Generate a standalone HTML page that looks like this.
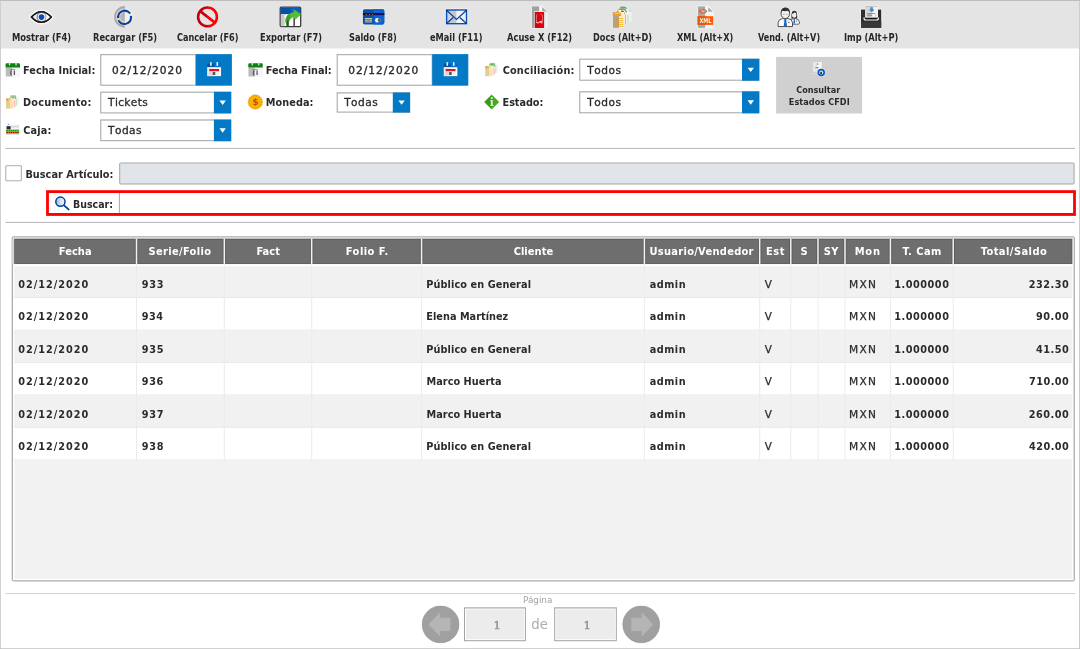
<!DOCTYPE html>
<html lang="es">
<head>
<meta charset="utf-8">
<title>Consulta de Documentos</title>
<style>
html,body{margin:0;padding:0;}
body{width:1080px;height:649px;overflow:hidden;background:#fff;position:relative;font-family:"DejaVu Sans","Liberation Sans",sans-serif;}
#app{position:absolute;left:0;top:0;width:1080px;height:649px;overflow:hidden;background:#fff;will-change:transform;}
#bg{position:absolute;left:0;top:0;display:block;}
.t{position:absolute;white-space:pre;display:block;}
</style>
</head>
<body>
<div id="app">
<svg id="bg" width="1080" height="649" viewBox="0 0 1080 649">
<rect x="0.00" y="0.00" width="1080.00" height="649.00" fill="#ffffff"/>
<rect x="0.00" y="0.00" width="1080.00" height="48.50" fill="#e4e4e4"/>
<svg x="20" y="0" width="50" height="30" viewBox="0 0 50 30">
<path d="M10.6 17 Q21.3 5.2 32 17 Q21.3 28.6 10.6 17Z" fill="#f4f4f4" stroke="#f6f6f6" stroke-width="3.4" stroke-linejoin="round"/>
<path d="M11.4 17 Q21.3 6.3 31.3 17 Q21.3 27.6 11.4 17Z" fill="#ebebeb" stroke="#1c1c1c" stroke-width="1.5" stroke-linejoin="round"/>
<path d="M25.5 12.6 L30.6 17 L25.5 21.4 Z" fill="#ffffff"/>
<circle cx="21.5" cy="17" r="4.9" fill="#8a8a8a"/>
<circle cx="21.7" cy="17" r="3.9" fill="#f2f2f2"/>
<circle cx="21.5" cy="17.1" r="2.8" fill="#0a49bb"/>
<path d="M11.4 17 Q21.3 6.3 31.3 17 Q21.3 27.6 11.4 17Z" fill="none" stroke="#1c1c1c" stroke-width="1.5" stroke-linejoin="round"/>
</svg>
<svg x="100" y="0" width="50" height="30" viewBox="0 0 50 30">
<circle cx="24.6" cy="16.9" r="10.2" fill="#e9e7e4"/>
<path d="M24.9 6.1 A10.8 10.8 0 0 0 24.9 27.7 Z" fill="#a9a9a9"/>
<circle cx="24.6" cy="16.9" r="8.5" fill="#f3ece3"/>
<path d="M24.9 8.6 A8.3 8.3 0 0 0 24.9 25.2 Z" fill="#d9cfc4"/>
<circle cx="24.6" cy="16.9" r="4.9" fill="#f1f1f1"/>
<path d="M24.9 12 A4.9 4.9 0 0 0 24.9 21.8 Z" fill="#b4b4b4"/>
<path d="M18.1 16.9 A6.6 6.6 0 0 1 29.6 12.9" fill="none" stroke="#0541a9" stroke-width="2" stroke-linecap="round"/>
<path d="M31 17 A6.6 6.6 0 0 1 18.9 21" fill="none" stroke="#0541a9" stroke-width="2" stroke-linecap="round"/>
<circle cx="18.1" cy="16.9" r="1.2" fill="#0541a9"/>
<circle cx="31" cy="17" r="1.2" fill="#0541a9"/>
</svg>
<svg x="183" y="0" width="50" height="30" viewBox="0 0 50 30">
<defs><linearGradient id="gcan" x1="0" x2="1" y1="0" y2="0"><stop offset="0.5" stop-color="#c4000c"/><stop offset="0.5" stop-color="#ff0000"/></linearGradient></defs>
<circle cx="24.5" cy="16.9" r="10.9" fill="#e9f1f1"/>
<circle cx="24.5" cy="16.9" r="8.2" fill="#e4e4e4"/>
<g stroke="url(#gcan)" fill="none" stroke-width="2.6">
<circle cx="24.5" cy="16.9" r="9.4"/>
<path d="M17.4 11.4 L31.6 22.4"/>
</g>
<rect x="14" y="6" width="10.5" height="22" fill="none"/>
</svg>
<svg x="266" y="0" width="50" height="30" viewBox="0 0 50 30">
<rect x="13.3" y="6.3" width="22.3" height="21.2" rx="1.5" fill="#f3f3f3"/>
<rect x="14.2" y="7.2" width="20.5" height="19.4" rx="1" fill="#ffffff" stroke="#383838" stroke-width="1.3"/>
<rect x="14.6" y="7.6" width="19.7" height="6.6" fill="#0451a8"/>
<rect x="24.5" y="7.6" width="9.8" height="6.6" fill="#0660c4"/>
<rect x="14.8" y="14.6" width="3.8" height="11.6" fill="#c9c9c9"/>
<path d="M20.6 26 Q16.6 14.6 27.6 12.2 L27.6 9.2 L35.3 14.2 L29.3 19.6 L29 17.3 Q22.4 17.4 22.6 26 Z" fill="#56bd32"/>
<path d="M20.6 26 Q17.2 17.4 24 13.4 L24 18.6 Q22.3 21 22.6 26 Z" fill="#3f9d2a"/>
<rect x="21" y="20.5" width="1.5" height="5.6" fill="#444444"/>
<rect x="27.4" y="17.6" width="1.5" height="8.6" fill="#444444"/>
</svg>
<svg x="349" y="0" width="50" height="30" viewBox="0 0 50 30">
<rect x="13.2" y="8.6" width="22.8" height="16.5" rx="2.2" fill="#f6efe6"/>
<rect x="13.9" y="9.2" width="21.4" height="15.2" rx="1.6" fill="#0552a4"/>
<path d="M24.6 9.2 H33.7 A1.6 1.6 0 0 1 35.3 10.8 V22.8 A1.6 1.6 0 0 1 33.7 24.4 H24.6 Z" fill="#0a63d3"/>
<rect x="13.9" y="13" width="21.4" height="2.1" fill="#1b0a5c"/>
<circle cx="17.4" cy="14.6" r="0.5" fill="#c79a1e"/><circle cx="20.5" cy="14.6" r="0.5" fill="#c79a1e"/><circle cx="23.5" cy="14.6" r="0.5" fill="#c79a1e"/>
<rect x="15.8" y="18" width="7.4" height="0.9" fill="#e6d9b4"/>
<rect x="15.8" y="19.2" width="7.4" height="3.6" fill="#6f93c2"/>
<rect x="16.6" y="20" width="1.6" height="0.9" fill="#e2c47c"/><rect x="21" y="20" width="1.6" height="0.9" fill="#e2c47c"/>
<circle cx="28.2" cy="20.3" r="2.2" fill="#f3f3f3"/>
<path d="M28.4 20.3 L30.4 18.1 L32.8 20.3 L30.4 22.6 Z" fill="#5a5a5a"/>
<circle cx="31.4" cy="19.6" r="0.5" fill="#c8922a"/><circle cx="31.4" cy="21.2" r="0.5" fill="#c8922a"/>
</svg>
<svg x="432" y="0" width="50" height="30" viewBox="0 0 50 30">
<rect x="13.2" y="8.6" width="22.8" height="16.5" rx="1" fill="#f6efe9"/>
<rect x="14.6" y="10" width="10" height="13.6" fill="#c3c7d0"/>
<rect x="24.6" y="10" width="9.8" height="13.6" fill="#f7f4ef"/>
<path d="M15.4 11.2 L20.6 17 L15.4 22.4 Z" fill="#d0d3da"/>
<path d="M33.6 11.2 L28.4 17 L33.6 22.4 Z" fill="#efeeec"/>
<rect x="14.6" y="10" width="19.9" height="13.7" fill="none" stroke="#0a52bb" stroke-width="1.4"/>
<path d="M14.8 10.4 L24.5 19.4 L34.2 10.4" fill="none" stroke="#0846ad" stroke-width="1.3"/>
<path d="M14.8 23.3 L21.2 17.6 M34.2 23.3 L27.8 17.6" fill="none" stroke="#0846ad" stroke-width="1.3"/>
<circle cx="14.9" cy="10.6" r="0.9" fill="#0636a0"/><circle cx="34.1" cy="10.6" r="0.9" fill="#0636a0"/>
<circle cx="14.9" cy="23.1" r="0.9" fill="#0636a0"/><circle cx="34.1" cy="23.1" r="0.9" fill="#0636a0"/>
</svg>
<svg x="515" y="0" width="50" height="30" viewBox="0 0 50 30">
<path d="M16.3 5.6 H27.4 L33 11.4 V28.4 H16.3 Z" fill="#eeeeee"/>
<rect x="17" y="6.4" width="7.3" height="21.5" fill="#a2a2a2"/>
<rect x="24.3" y="6.4" width="2.8" height="6" fill="#f6f6f6"/>
<path d="M27.2 7 L32 11.8 H27.2 Z" fill="#a9a9a9"/>
<rect x="19.3" y="11.2" width="10.6" height="17" fill="#dbeef5"/>
<rect x="19.9" y="12" width="9.2" height="16" fill="#e3000f"/>
<rect x="19.9" y="12" width="4.6" height="16" fill="#d3000d"/>
<path d="M21.6 14.6 Q21.2 19 21.6 22.6 M27.4 14.8 Q27.9 19 27.4 22.6 M22.4 14.3 L23 13.8 M25.2 14.3 L26.6 14.6" fill="none" stroke="#f2b0b0" stroke-width="0.6"/>
<path d="M21.4 22.6 Q23.6 23.6 25 21.6 L26.6 21.4 L25.6 22.6 L27.2 23" fill="none" stroke="#ffffff" stroke-width="0.9"/>
</svg>
<svg x="598" y="0" width="50" height="30" viewBox="0 0 50 30">
<path d="M21.6 5.6 H27.6 L31 9.6 L33.4 10.6 V22.4 H21.6 Z" fill="#f0f0f0"/>
<path d="M22.2 6.4 H27 L29.8 8.8 H22.2 Z" fill="#8d8d8d"/>
<rect x="30.6" y="10.2" width="2.6" height="1.2" fill="#c9c9c9"/>
<path d="M20 8.6 H27.6 L30.6 12.6 V23 H20 Z" fill="#f6fbf6"/>
<path d="M20.4 8.8 L24 8.2 L27.4 8.4 L29.2 12.4 L27.8 12.6 L26.4 10 L20.4 10 Z" fill="#4fc04a"/>
<rect x="29.2" y="14.6" width="1.6" height="8.2" fill="#bfe6bd"/>
<path d="M17.8 10.2 H25 L28.4 14.2 V25 H17.8 Z" fill="#fbf4f6"/>
<path d="M18.2 11.8 L19.4 10.2 L21.4 11.6 Z" fill="#dc5a68"/>
<path d="M23 10.6 L25.4 10.8 L27 14 L25.6 13.8 L24.4 12 L23 11.6 Z" fill="#ff0a1a"/>
<rect x="26.8" y="14.2" width="1.3" height="10.4" fill="#f3a3b4"/>
<rect x="14.9" y="12" width="11.4" height="15.8" fill="#fdf2d6"/>
<rect x="15" y="12.2" width="6" height="15.6" fill="#b3a18e"/>
<rect x="21" y="16.2" width="5" height="11.4" fill="#fdebb9"/>
<rect x="14.8" y="12.4" width="8.4" height="3.6" rx="0.6" fill="#e7a11b"/>
<rect x="16.4" y="13.2" width="6.4" height="0.8" fill="#f6d48a"/>
<g fill="#f5c242"><rect x="17" y="18" width="8" height="1"/><rect x="17" y="20" width="8.4" height="1"/><rect x="17" y="22" width="8" height="1"/><rect x="17" y="24" width="8.4" height="1"/><rect x="17" y="26" width="8.4" height="1"/></g>
<g fill="#cf9a56"><rect x="17" y="18" width="4" height="1"/><rect x="17" y="20" width="4" height="1"/><rect x="17" y="22" width="4" height="1"/><rect x="17" y="24" width="4" height="1"/><rect x="17" y="26" width="4" height="1"/></g>
</svg>
<svg x="681" y="0" width="50" height="30" viewBox="0 0 50 30">
<path d="M16.3 5.6 H27.4 L33 11.4 V28.4 H16.3 Z" fill="#eef3f6"/>
<rect x="17" y="6.4" width="7.3" height="21.5" fill="#a9a9a9"/>
<rect x="24.3" y="6.4" width="7.8" height="21.5" fill="#f4f8fa"/>
<path d="M27.2 7 L32 11.8 H27.2 Z" fill="#ababab"/>
<path d="M27.4 5.6 L33 11.4 L33 5.6 Z" fill="#e4e4e4"/>
<path d="M20.4 9.4 L18.4 11.2 L20.4 13 M23.6 9.4 L25.6 11.2 L23.6 13 M22.6 8.8 L21.4 13.8" fill="none" stroke="#e8561a" stroke-width="1.1"/>
<circle cx="22" cy="11.2" r="0.8" fill="#dfe8f0"/>
<rect x="16.6" y="16.2" width="15.6" height="8.7" fill="#ff5a00"/>
<rect x="16.6" y="16.2" width="7.8" height="8.7" fill="#d95c12"/>
<text x="24.4" y="23.1" text-anchor="middle" font-family="'DejaVu Sans Condensed','DejaVu Sans','Liberation Sans',sans-serif" font-weight="bold" font-size="6.6" fill="#fdf3ea" textLength="12" lengthAdjust="spacingAndGlyphs">XML</text>
</svg>
<svg x="764" y="0" width="50" height="30" viewBox="0 0 50 30">
<path d="M13.2 27.2 V22.4 Q13.6 17.6 18.4 17.4 L17 15.4 Q15.2 9.4 18.8 7.4 Q22.4 5.6 25.4 9.4 L26.6 11.2 Q29.6 9.8 32.4 11 Q34.6 13.4 33.8 18 Q36.6 19.8 36.2 23.6 L34.6 25 H29.6 L29.2 27.2 Z" fill="#f4f4f4"/>
<path d="M27.4 18.4 Q27 10.6 30.4 10.8 Q33.6 10.9 33.2 18.4 Z" fill="#2e2e2e"/>
<ellipse cx="30.2" cy="15" rx="2.2" ry="2.8" fill="#eeeeee"/>
<path d="M27.8 13.8 Q29.8 13.6 31 11.8 Q32 13.4 32.6 13.8 L32.2 11.6 L29.6 11 L28 12 Z" fill="#2e2e2e"/>
<path d="M26.8 24.2 V20.6 Q27 18.9 29 18.7 H31.6 Q35.2 19 35.4 22 V23.4 Q35.3 24.2 34.4 24.2 Z" fill="#fbfbfb" stroke="#4a4a4a" stroke-width="0.9"/>
<path d="M29.8 18.8 H30.8 L31 23.6 H29.4 Z" fill="#0a68cf"/>
<circle cx="32.4" cy="21.2" r="0.8" fill="#8a8a8a"/>
<ellipse cx="21.3" cy="13.4" rx="4.3" ry="5.2" fill="#f1f1f1" stroke="#3a3a3a" stroke-width="0.9"/>
<path d="M17 13.6 Q16.2 8 21.2 7.4 Q26.4 7.2 25.7 13.4 Q25 11.4 23.8 10.8 Q20.4 11.6 18.2 10.8 Q17.2 12 17 13.6 Z" fill="#303030"/>
<path d="M19.2 14.4 H20.6 M22.2 14.4 H23.6" stroke="#8a8a8a" stroke-width="0.7" fill="none"/>
<path d="M14.1 26.6 V22.6 Q14.4 18.8 18.6 18.6 H24 Q28.2 18.8 28.5 22.6 V26.6 Z" fill="#fdfdfd" stroke="#4a4a4a" stroke-width="1"/>
<path d="M20.4 19 H22.2 L23 26.2 H19.8 Z" fill="#0a68cf"/>
<path d="M18 19.4 L20.4 22.6 M24.6 19.4 L22.4 22.6" stroke="#d8d8d8" stroke-width="0.7" fill="none"/>
<circle cx="24.8" cy="22.4" r="0.9" fill="#8a8a8a"/>
</svg>
<svg x="847" y="0" width="50" height="30" viewBox="0 0 50 30">
<rect x="13.2" y="8.8" width="22" height="19.6" fill="#efefef"/>
<rect x="17.2" y="5.4" width="14.4" height="6" fill="#efefef"/>
<rect x="14" y="9.6" width="20.2" height="18.2" fill="#2e2e2e"/>
<rect x="14" y="21.4" width="20.2" height="6.4" fill="#333333"/>
<path d="M14 23 H34.2 M14 24.6 H34.2 M14 26.2 H34.2" stroke="#484848" stroke-width="0.5" fill="none"/>
<rect x="18" y="6.1" width="13" height="11.6" fill="#f3f3f3"/>
<rect x="18" y="6.1" width="6.4" height="11.6" fill="#d6d6d6"/>
<rect x="18.2" y="6.3" width="12.6" height="0.8" fill="#b9b9b9"/>
<path d="M23.8 7.4 H25.6 V9.8 H27 L24.7 12 L22.4 9.8 H23.8 Z" fill="#3f86c8" stroke="#3f86c8" stroke-width="0.6" stroke-linejoin="round"/>
<rect x="20.2" y="13" width="7.6" height="0.9" fill="#8b8b8b"/>
<rect x="20.2" y="14.4" width="5" height="1.9" fill="#9b9b9b"/>
<rect x="26" y="14.4" width="2" height="1.9" fill="#fafafa"/>
<rect x="28.4" y="13.4" width="0.7" height="3" fill="#c2c2c2"/>
<path d="M16.4 17.4 H32 Q32.2 20.6 29.4 20.6 H19 Q16.2 20.6 16.4 17.4 Z" fill="#f6f6f6"/>
<path d="M17.4 17.8 H31 Q31 19.6 29 19.6 H19.4 Q17.4 19.6 17.4 17.8 Z" fill="#141414"/>
</svg>
<rect x="0.00" y="0.00" width="1080.00" height="1.00" fill="#bdbdbd"/>
<rect x="0.00" y="1.00" width="1.00" height="648.00" fill="#cfcfcf"/>
<rect x="1079.00" y="1.00" width="1.00" height="648.00" fill="#cdcdcd"/>
<rect x="0.00" y="648.30" width="1080.00" height="0.70" fill="#bdbdbd"/>
<svg x="0" y="55" width="30" height="30" viewBox="0 0 30 30">
<rect x="5.6" y="8.4" width="14.4" height="13.2" fill="#f2f2f6"/>
<rect x="5.8" y="12.6" width="6.6" height="8.8" fill="#bcbcbc"/>
<rect x="12.4" y="12.6" width="7.4" height="8.8" fill="#f6f6f9"/>
<path d="M5.6 9.4 Q5.6 8.2 6.8 8.2 H18.8 Q20 8.2 20 9.4 V12.4 H5.6 Z" fill="#0b8413"/>
<rect x="8.9" y="7.2" width="1.3" height="3.2" fill="#e6e6e6"/><rect x="15.4" y="7.2" width="1.3" height="3.2" fill="#e0e0ee"/>
<rect x="9.6" y="14" width="5.4" height="0.8" fill="#8a8a8a"/>
<path d="M11.4 15.4 Q10 18 11.4 20.4 M14.4 15.6 V20" stroke="#5a5a5a" stroke-width="1.3" fill="none"/>
</svg>
<svg x="0" y="87" width="30" height="30" viewBox="0 0 30 30">
<path d="M10.4 8 H15.6 L18.6 11 V18.4 H10.4 Z" fill="#f2f2f2"/>
<path d="M10.8 8.6 H15.4 L16.4 9.8 H10.8 Z" fill="#9a9a9a"/>
<path d="M9.6 9.6 H14.8 L17.4 12.4 V19.4 H9.6 Z" fill="#eef8ee"/>
<path d="M9.8 9.8 L13.6 9.2 L15.4 10 L16.8 12.4 L15.4 12 L14.6 10.8 L9.8 10.8 Z" fill="#58c254"/>
<rect x="16" y="13" width="1.1" height="5.4" fill="#c6e8c4"/>
<path d="M8.2 10.8 H13.2 L15.6 13.4 V20.4 H8.2 Z" fill="#fbf1f3"/>
<path d="M9 11.8 L10 10.8 L11.2 11.8 Z M12 10.8 L13.4 11 L14.2 12.4 L12.4 12.2 Z" fill="#f2364a"/>
<rect x="14.2" y="13" width="1.1" height="7" fill="#f4afbd"/>
<rect x="6.2" y="11.4" width="7.8" height="10.2" fill="#fcefc6"/>
<rect x="6.2" y="11.4" width="3.6" height="10.2" fill="#dcc39a"/>
<rect x="6.3" y="11.6" width="1.8" height="2" fill="#e7a11b"/>
<rect x="9.8" y="12.2" width="2" height="1.4" fill="#fbd75a"/>
<g fill="#f4d68a"><rect x="7" y="15" width="6" height="0.8"/><rect x="7" y="16.8" width="6" height="0.8"/><rect x="7" y="18.6" width="6" height="0.8"/><rect x="7" y="20.2" width="6" height="0.8"/></g>
</svg>
<svg x="0" y="115" width="30" height="30" viewBox="0 0 30 30">
<rect x="5.8" y="9.6" width="13.6" height="10.4" fill="#f4f4f8"/>
<rect x="7" y="8.4" width="3" height="1.4" fill="#e8eef6"/><rect x="8" y="8.9" width="0.9" height="0.9" fill="#3c8edc"/>
<rect x="10.6" y="10.6" width="8.4" height="2" fill="#dcdcdc"/>
<rect x="6.6" y="11.2" width="4" height="3.2" fill="#2a2a2a"/>
<rect x="6" y="14.6" width="13.2" height="2.2" fill="#46b944"/>
<g fill="#2f8f2f"><rect x="7" y="15" width="1" height="1.2"/><rect x="9" y="15" width="1" height="1.2"/><rect x="11" y="15" width="1" height="1.2"/><rect x="13" y="15" width="1" height="1.2"/><rect x="15" y="15" width="1" height="1.2"/><rect x="17" y="15" width="1" height="1.2"/></g>
<rect x="6" y="16.8" width="13.2" height="1.9" fill="#ff6a00"/>
<g fill="#3a1a00"><rect x="6.6" y="17.1" width="1.2" height="1.2"/><rect x="8.8" y="17.1" width="1.2" height="1.2"/><rect x="11" y="17.1" width="1.2" height="1.2"/><rect x="13.2" y="17.1" width="1.2" height="1.2"/><rect x="15.4" y="17.1" width="1.2" height="1.2"/><rect x="17.4" y="17.1" width="1.2" height="1.2"/></g>
<rect x="6" y="18.7" width="13.2" height="1.1" fill="#c9def2"/>
</svg>
<svg x="242.7" y="55" width="30" height="30" viewBox="0 0 30 30">
<rect x="5.6" y="8.4" width="14.4" height="13.2" fill="#f2f2f6"/>
<rect x="5.8" y="12.6" width="6.6" height="8.8" fill="#bcbcbc"/>
<rect x="12.4" y="12.6" width="7.4" height="8.8" fill="#f6f6f9"/>
<path d="M5.6 9.4 Q5.6 8.2 6.8 8.2 H18.8 Q20 8.2 20 9.4 V12.4 H5.6 Z" fill="#0b8413"/>
<rect x="8.9" y="7.2" width="1.3" height="3.2" fill="#e6e6e6"/><rect x="15.4" y="7.2" width="1.3" height="3.2" fill="#e0e0ee"/>
<rect x="9.6" y="14" width="5.4" height="0.8" fill="#8a8a8a"/>
<path d="M11.4 15.4 Q10 18 11.4 20.4 M14.4 15.6 V20" stroke="#5a5a5a" stroke-width="1.3" fill="none"/>
</svg>
<svg x="240" y="87" width="30" height="30" viewBox="0 0 30 30">
<circle cx="15.3" cy="15" r="7.2" fill="#f6a800"/>
<circle cx="15.3" cy="15" r="5.6" fill="#fbb500"/>
<circle cx="15.3" cy="15" r="7.2" fill="none" stroke="#f19c00" stroke-width="0.8" stroke-dasharray="1.2 1"/>
<text x="15.4" y="18.3" text-anchor="middle" font-family="'DejaVu Sans','Liberation Sans',sans-serif" font-weight="bold" font-size="9.4" fill="#b5531a">$</text>
</svg>
<svg x="479.2" y="54.6" width="30" height="30" viewBox="0 0 30 30">
<path d="M10.4 8 H15.6 L18.6 11 V18.4 H10.4 Z" fill="#f2f2f2"/>
<path d="M10.8 8.6 H15.4 L16.4 9.8 H10.8 Z" fill="#9a9a9a"/>
<path d="M9.6 9.6 H14.8 L17.4 12.4 V19.4 H9.6 Z" fill="#eef8ee"/>
<path d="M9.8 9.8 L13.6 9.2 L15.4 10 L16.8 12.4 L15.4 12 L14.6 10.8 L9.8 10.8 Z" fill="#58c254"/>
<rect x="16" y="13" width="1.1" height="5.4" fill="#c6e8c4"/>
<path d="M8.2 10.8 H13.2 L15.6 13.4 V20.4 H8.2 Z" fill="#fbf1f3"/>
<path d="M9 11.8 L10 10.8 L11.2 11.8 Z M12 10.8 L13.4 11 L14.2 12.4 L12.4 12.2 Z" fill="#f2364a"/>
<rect x="14.2" y="13" width="1.1" height="7" fill="#f4afbd"/>
<rect x="6.2" y="11.4" width="7.8" height="10.2" fill="#fcefc6"/>
<rect x="6.2" y="11.4" width="3.6" height="10.2" fill="#dcc39a"/>
<rect x="6.3" y="11.6" width="1.8" height="2" fill="#e7a11b"/>
<rect x="9.8" y="12.2" width="2" height="1.4" fill="#fbd75a"/>
<g fill="#f4d68a"><rect x="7" y="15" width="6" height="0.8"/><rect x="7" y="16.8" width="6" height="0.8"/><rect x="7" y="18.6" width="6" height="0.8"/><rect x="7" y="20.2" width="6" height="0.8"/></g>
</svg>
<svg x="476" y="87" width="30" height="30" viewBox="0 0 30 30">
<path d="M15.7 8 L22.8 15 L15.7 22 L8.6 15 Z" fill="#3fae18" stroke="#3fae18" stroke-width="0.7" stroke-linejoin="round"/>
<path d="M15.7 8 L15.7 22 L8.6 15 Z" fill="#37991a"/>
<text x="15.8" y="19" text-anchor="middle" font-family="'DejaVu Serif','Liberation Serif',serif" font-weight="bold" font-size="10.5" fill="#e9e1e9">i</text>
</svg>
<rect x="100.30" y="54.20" width="96.00" height="31.50" fill="#a2a2a2"/>
<rect x="100.30" y="54.20" width="96.00" height="1.00" fill="#b2b2b2"/>
<rect x="101.30" y="55.20" width="94.00" height="29.50" fill="#ffffff"/>
<rect x="195.80" y="54.10" width="36.10" height="31.60" fill="#047ac7"/>
<svg x="207.1" y="62" width="14.2" height="14.6" viewBox="0 0 14.2 14.6">
<rect x="0.2" y="1.6" width="13.8" height="3.6" fill="#0552a4"/>
<rect x="7" y="1.6" width="7" height="3.6" fill="#0a6dcb"/>
<rect x="3" y="0.2" width="1.6" height="3.6" fill="#f4ead8"/><rect x="9.4" y="0.2" width="1.6" height="3.6" fill="#f0f4fa"/>
<rect x="0.2" y="5.2" width="13.8" height="9" fill="#fbfbfb"/>
<rect x="0.2" y="5.2" width="6.8" height="9" fill="#ece6e2"/>
<rect x="2.2" y="7" width="9.8" height="2.2" fill="#e8101c"/>
<rect x="2" y="10.2" width="3" height="2.6" fill="#d6d6d6"/>
<rect x="5.6" y="10" width="2.6" height="3" fill="#555555"/>
<rect x="9" y="10.2" width="3" height="2.6" fill="#eeeeee"/>
</svg>
<rect x="336.70" y="54.20" width="96.00" height="31.50" fill="#a2a2a2"/>
<rect x="336.70" y="54.20" width="96.00" height="1.00" fill="#b2b2b2"/>
<rect x="337.70" y="55.20" width="94.00" height="29.50" fill="#ffffff"/>
<rect x="432.20" y="54.10" width="36.10" height="31.60" fill="#047ac7"/>
<svg x="443.5" y="62" width="14.2" height="14.6" viewBox="0 0 14.2 14.6">
<rect x="0.2" y="1.6" width="13.8" height="3.6" fill="#0552a4"/>
<rect x="7" y="1.6" width="7" height="3.6" fill="#0a6dcb"/>
<rect x="3" y="0.2" width="1.6" height="3.6" fill="#f4ead8"/><rect x="9.4" y="0.2" width="1.6" height="3.6" fill="#f0f4fa"/>
<rect x="0.2" y="5.2" width="13.8" height="9" fill="#fbfbfb"/>
<rect x="0.2" y="5.2" width="6.8" height="9" fill="#ece6e2"/>
<rect x="2.2" y="7" width="9.8" height="2.2" fill="#e8101c"/>
<rect x="2" y="10.2" width="3" height="2.6" fill="#d6d6d6"/>
<rect x="5.6" y="10" width="2.6" height="3" fill="#555555"/>
<rect x="9" y="10.2" width="3" height="2.6" fill="#eeeeee"/>
</svg>
<rect x="100.30" y="91.80" width="130.90" height="21.60" fill="#a2a2a2"/>
<rect x="100.30" y="91.80" width="130.90" height="1.00" fill="#b2b2b2"/>
<rect x="101.30" y="92.80" width="128.90" height="19.60" fill="#ffffff"/>
<rect x="213.90" y="91.80" width="17.30" height="21.60" fill="#047ac7"/>
<path d="M219.45 100.50 H225.85 L222.65 104.90 Z" fill="#ffffff"/>
<rect x="100.30" y="119.60" width="130.90" height="21.60" fill="#a2a2a2"/>
<rect x="100.30" y="119.60" width="130.90" height="1.00" fill="#b2b2b2"/>
<rect x="101.30" y="120.60" width="128.90" height="19.60" fill="#ffffff"/>
<rect x="213.90" y="119.60" width="17.30" height="21.60" fill="#047ac7"/>
<path d="M219.45 128.30 H225.85 L222.65 132.70 Z" fill="#ffffff"/>
<rect x="336.70" y="92.50" width="73.40" height="20.10" fill="#a2a2a2"/>
<rect x="336.70" y="92.50" width="73.40" height="1.00" fill="#b2b2b2"/>
<rect x="337.70" y="93.50" width="71.40" height="18.10" fill="#ffffff"/>
<rect x="392.80" y="92.50" width="17.30" height="20.10" fill="#047ac7"/>
<path d="M398.35 100.45 H404.75 L401.55 104.85 Z" fill="#ffffff"/>
<rect x="579.30" y="58.80" width="180.00" height="21.90" fill="#a2a2a2"/>
<rect x="579.30" y="58.80" width="180.00" height="1.00" fill="#b2b2b2"/>
<rect x="580.30" y="59.80" width="178.00" height="19.90" fill="#ffffff"/>
<rect x="742.00" y="58.80" width="17.30" height="21.90" fill="#047ac7"/>
<path d="M747.55 67.65 H753.95 L750.75 72.05 Z" fill="#ffffff"/>
<rect x="579.30" y="91.40" width="180.00" height="21.90" fill="#a2a2a2"/>
<rect x="579.30" y="91.40" width="180.00" height="1.00" fill="#b2b2b2"/>
<rect x="580.30" y="92.40" width="178.00" height="19.90" fill="#ffffff"/>
<rect x="742.00" y="91.40" width="17.30" height="21.90" fill="#047ac7"/>
<path d="M747.55 100.25 H753.95 L750.75 104.65 Z" fill="#ffffff"/>
<rect x="776.10" y="56.90" width="86.00" height="56.60" fill="#d0d0d0"/>
<svg x="813" y="62" width="13" height="15.2" viewBox="0 0 13 15.2">
<rect x="0.2" y="0.2" width="8.6" height="11.4" fill="#f6f6f6"/>
<rect x="0.2" y="0.2" width="4.4" height="11.4" fill="#e6e6e6"/>
<path d="M4.6 1 L5.6 2.6 H3.6 Z" fill="#3f86c8"/>
<rect x="2.4" y="5" width="3" height="1.2" fill="#8a8a8a"/>
<rect x="0.4" y="10.4" width="3" height="0.8" fill="#bdbdbd"/>
<circle cx="8.2" cy="10.6" r="4.4" fill="#f6ead8"/>
<circle cx="8.2" cy="10.6" r="3.8" fill="#0a5bc4"/>
<circle cx="8.2" cy="10.6" r="2" fill="#dfe6ee"/>
<rect x="7.2" y="9.8" width="1.8" height="2.2" fill="#3a3a3a"/>
</svg>
<rect x="5.50" y="147.90" width="1069.50" height="1.00" fill="#b4b4bb"/>
<rect x="5.50" y="221.90" width="1069.50" height="1.00" fill="#b4b4bb"/>
<rect x="5.50" y="593.10" width="1069.50" height="1.00" fill="#d0d0d0"/>
<rect x="5.30" y="165.20" width="16.50" height="16.10" fill="#a9a9a9" rx="1.2"/>
<rect x="6.30" y="166.20" width="14.50" height="14.10" fill="#ffffff"/>
<rect x="119.20" y="162.40" width="955.40" height="22.10" fill="#a3a3a3" rx="1.8"/>
<rect x="120.20" y="163.40" width="953.40" height="20.10" fill="#e1e4e9"/>
<rect x="46.10" y="190.20" width="1029.80" height="25.70" fill="#ff0000"/>
<rect x="48.90" y="193.00" width="1024.20" height="20.00" fill="#ffffff"/>
<rect x="118.90" y="193.00" width="1.00" height="20.00" fill="#a9a9a9"/>
<svg x="40" y="186" width="30" height="30" viewBox="0 0 30 30">
<defs><linearGradient id="gmag" x1="0" x2="1" y1="0" y2="0"><stop offset="0" stop-color="#8fb4dc"/><stop offset="0.5" stop-color="#cfe2f2"/><stop offset="1" stop-color="#f4f8fc"/></linearGradient></defs>
<circle cx="20.4" cy="15.7" r="4.6" fill="url(#gmag)" stroke="#083d9e" stroke-width="1.5"/>
<path d="M24 19.4 L28.6 23.4" stroke="#083d9e" stroke-width="1.9" stroke-linecap="round" fill="none"/>
</svg>
<rect x="11.70" y="236.10" width="1063.20" height="345.40" fill="#adadad" rx="2.5"/>
<rect x="13.00" y="237.40" width="1060.60" height="342.80" fill="#ffffff"/>
<rect x="13.50" y="237.40" width="1059.70" height="1.50" fill="#e6e6e6"/>
<rect x="14.00" y="236.10" width="1058.60" height="1.30" fill="#c2c2c2"/>
<rect x="11.70" y="238.60" width="2.60" height="25.80" fill="#d0d0d0"/>
<rect x="1072.30" y="238.60" width="1.30" height="25.80" fill="#e4e4e4"/>
<rect x="14.30" y="238.90" width="1057.90" height="340.10" fill="#f2f2f2"/>
<rect x="14.20" y="238.70" width="1058.10" height="25.50" fill="#5c5c5c"/>
<rect x="15.10" y="239.70" width="119.75" height="23.60" fill="#6e6e6e"/>
<rect x="135.75" y="238.70" width="1.50" height="27.30" fill="#f3f3f3"/>
<rect x="138.15" y="239.70" width="84.50" height="23.60" fill="#6e6e6e"/>
<rect x="223.55" y="238.70" width="1.50" height="27.30" fill="#f3f3f3"/>
<rect x="225.95" y="239.70" width="84.10" height="23.60" fill="#6e6e6e"/>
<rect x="310.95" y="238.70" width="1.50" height="27.30" fill="#f3f3f3"/>
<rect x="313.35" y="239.70" width="106.60" height="23.60" fill="#6e6e6e"/>
<rect x="420.85" y="238.70" width="1.50" height="27.30" fill="#f3f3f3"/>
<rect x="423.25" y="239.70" width="219.50" height="23.60" fill="#6e6e6e"/>
<rect x="643.65" y="238.70" width="1.50" height="27.30" fill="#f3f3f3"/>
<rect x="646.05" y="239.70" width="112.00" height="23.60" fill="#6e6e6e"/>
<rect x="758.95" y="238.70" width="1.50" height="27.30" fill="#f3f3f3"/>
<rect x="761.35" y="239.70" width="27.80" height="23.60" fill="#6e6e6e"/>
<rect x="790.05" y="238.70" width="1.50" height="27.30" fill="#f3f3f3"/>
<rect x="792.45" y="239.70" width="23.90" height="23.60" fill="#6e6e6e"/>
<rect x="817.25" y="238.70" width="1.50" height="27.30" fill="#f3f3f3"/>
<rect x="819.65" y="239.70" width="23.70" height="23.60" fill="#6e6e6e"/>
<rect x="844.25" y="238.70" width="1.50" height="27.30" fill="#f3f3f3"/>
<rect x="846.65" y="239.70" width="42.10" height="23.60" fill="#6e6e6e"/>
<rect x="889.65" y="238.70" width="1.50" height="27.30" fill="#f3f3f3"/>
<rect x="892.05" y="239.70" width="59.50" height="23.60" fill="#6e6e6e"/>
<rect x="952.45" y="238.70" width="1.50" height="27.30" fill="#f3f3f3"/>
<rect x="954.85" y="239.70" width="116.55" height="23.60" fill="#6e6e6e"/>
<rect x="14.20" y="264.20" width="1058.10" height="2.10" fill="#ffffff"/>
<rect x="14.20" y="266.30" width="1058.10" height="31.85" fill="#f1f1f1"/>
<rect x="14.20" y="297.15" width="1058.10" height="1.00" fill="#e9e9e9"/>
<rect x="14.20" y="298.15" width="1058.10" height="32.45" fill="#ffffff"/>
<rect x="14.20" y="329.60" width="1058.10" height="1.00" fill="#e9e9e9"/>
<rect x="14.20" y="330.60" width="1058.10" height="32.45" fill="#f1f1f1"/>
<rect x="14.20" y="362.05" width="1058.10" height="1.00" fill="#e9e9e9"/>
<rect x="14.20" y="363.05" width="1058.10" height="32.45" fill="#ffffff"/>
<rect x="14.20" y="394.50" width="1058.10" height="1.00" fill="#e9e9e9"/>
<rect x="14.20" y="395.50" width="1058.10" height="32.45" fill="#f1f1f1"/>
<rect x="14.20" y="426.95" width="1058.10" height="1.00" fill="#e9e9e9"/>
<rect x="14.20" y="427.95" width="1058.10" height="32.45" fill="#ffffff"/>
<rect x="14.20" y="459.40" width="1058.10" height="1.00" fill="#e9e9e9"/>
<rect x="136.00" y="264.20" width="1.00" height="196.20" fill="#ebebeb"/>
<rect x="223.80" y="264.20" width="1.00" height="196.20" fill="#ebebeb"/>
<rect x="311.20" y="264.20" width="1.00" height="196.20" fill="#ebebeb"/>
<rect x="421.10" y="264.20" width="1.00" height="196.20" fill="#ebebeb"/>
<rect x="643.90" y="264.20" width="1.00" height="196.20" fill="#ebebeb"/>
<rect x="759.20" y="264.20" width="1.00" height="196.20" fill="#ebebeb"/>
<rect x="790.30" y="264.20" width="1.00" height="196.20" fill="#ebebeb"/>
<rect x="817.50" y="264.20" width="1.00" height="196.20" fill="#ebebeb"/>
<rect x="844.50" y="264.20" width="1.00" height="196.20" fill="#ebebeb"/>
<rect x="889.90" y="264.20" width="1.00" height="196.20" fill="#ebebeb"/>
<rect x="952.70" y="264.20" width="1.00" height="196.20" fill="#ebebeb"/>
<svg x="421.6" y="605.4" width="38" height="38" viewBox="0 0 38 38"><circle cx="19" cy="19" r="18.4" fill="#a0a0a0" stroke="#959595" stroke-width="0.7"/><path d="M7.4 19 L18.2 7.6 V12.8 H28.4 V25.2 H18.2 V30.4 Z" fill="#b5b5b5" stroke="#b5b5b5" stroke-width="0.8" stroke-linejoin="round"/></svg>
<svg x="622.2" y="605.4" width="38" height="38" viewBox="0 0 38 38"><circle cx="19" cy="19" r="18.4" fill="#a0a0a0" stroke="#959595" stroke-width="0.7"/><path transform="translate(38,0) scale(-1,1)" d="M7.4 19 L18.2 7.6 V12.8 H28.4 V25.2 H18.2 V30.4 Z" fill="#b5b5b5" stroke="#b5b5b5" stroke-width="0.8" stroke-linejoin="round"/></svg>
<rect x="464.00" y="607.50" width="61.90" height="33.70" fill="#a2a2a2"/>
<rect x="464.00" y="607.50" width="61.90" height="1.00" fill="#b0b0b0"/>
<rect x="465.00" y="608.50" width="59.90" height="31.70" fill="#ffffff"/>
<rect x="466.00" y="609.50" width="57.90" height="29.70" fill="#ececec"/>
<rect x="554.20" y="607.50" width="62.60" height="33.70" fill="#a2a2a2"/>
<rect x="554.20" y="607.50" width="62.60" height="1.00" fill="#b0b0b0"/>
<rect x="555.20" y="608.50" width="60.60" height="31.70" fill="#ffffff"/>
<rect x="556.20" y="609.50" width="58.60" height="29.70" fill="#ececec"/>
</svg>
<span class="t" id="t0" style="left:11.90px;top:29.90px;height:15px;line-height:15px;font-family:'DejaVu Sans Condensed','DejaVu Sans','Liberation Sans',sans-serif;font-size:9.6px;font-weight:bold;color:#262626;letter-spacing:0.000px;transform:scaleX(0.9714);transform-origin:0 50%;">Mostrar (F4)</span>
<span class="t" id="t1" style="left:92.74px;top:29.90px;height:15px;line-height:15px;font-family:'DejaVu Sans Condensed','DejaVu Sans','Liberation Sans',sans-serif;font-size:9.6px;font-weight:bold;color:#262626;letter-spacing:0.000px;transform:scaleX(0.9609);transform-origin:0 50%;">Recargar (F5)</span>
<span class="t" id="t2" style="left:177.40px;top:29.90px;height:15px;line-height:15px;font-family:'DejaVu Sans Condensed','DejaVu Sans','Liberation Sans',sans-serif;font-size:9.6px;font-weight:bold;color:#262626;letter-spacing:0.000px;transform:scaleX(0.9448);transform-origin:0 50%;">Cancelar (F6)</span>
<span class="t" id="t3" style="left:260.16px;top:29.90px;height:15px;line-height:15px;font-family:'DejaVu Sans Condensed','DejaVu Sans','Liberation Sans',sans-serif;font-size:9.6px;font-weight:bold;color:#262626;letter-spacing:0.000px;transform:scaleX(0.9569);transform-origin:0 50%;">Exportar (F7)</span>
<span class="t" id="t4" style="left:349.42px;top:29.90px;height:15px;line-height:15px;font-family:'DejaVu Sans Condensed','DejaVu Sans','Liberation Sans',sans-serif;font-size:9.6px;font-weight:bold;color:#262626;letter-spacing:0.000px;transform:scaleX(0.9548);transform-origin:0 50%;">Saldo (F8)</span>
<span class="t" id="t5" style="left:430.00px;top:29.90px;height:15px;line-height:15px;font-family:'DejaVu Sans Condensed','DejaVu Sans','Liberation Sans',sans-serif;font-size:9.6px;font-weight:bold;color:#262626;letter-spacing:0.000px;transform:scaleX(0.9552);transform-origin:0 50%;">eMail (F11)</span>
<span class="t" id="t6" style="left:507.00px;top:29.90px;height:15px;line-height:15px;font-family:'DejaVu Sans Condensed','DejaVu Sans','Liberation Sans',sans-serif;font-size:9.6px;font-weight:bold;color:#262626;letter-spacing:0.000px;transform:scaleX(0.9668);transform-origin:0 50%;">Acuse X (F12)</span>
<span class="t" id="t7" style="left:592.68px;top:29.90px;height:15px;line-height:15px;font-family:'DejaVu Sans Condensed','DejaVu Sans','Liberation Sans',sans-serif;font-size:9.6px;font-weight:bold;color:#262626;letter-spacing:0.000px;transform:scaleX(0.9471);transform-origin:0 50%;">Docs (Alt+D)</span>
<span class="t" id="t8" style="left:677.26px;top:29.90px;height:15px;line-height:15px;font-family:'DejaVu Sans Condensed','DejaVu Sans','Liberation Sans',sans-serif;font-size:9.6px;font-weight:bold;color:#262626;letter-spacing:0.000px;transform:scaleX(0.9488);transform-origin:0 50%;">XML (Alt+X)</span>
<span class="t" id="t9" style="left:757.94px;top:29.90px;height:15px;line-height:15px;font-family:'DejaVu Sans Condensed','DejaVu Sans','Liberation Sans',sans-serif;font-size:9.6px;font-weight:bold;color:#262626;letter-spacing:0.000px;transform:scaleX(0.9381);transform-origin:0 50%;">Vend. (Alt+V)</span>
<span class="t" id="t10" style="left:844.45px;top:29.90px;height:15px;line-height:15px;font-family:'DejaVu Sans Condensed','DejaVu Sans','Liberation Sans',sans-serif;font-size:9.6px;font-weight:bold;color:#262626;letter-spacing:0.000px;transform:scaleX(0.9609);transform-origin:0 50%;">Imp (Alt+P)</span>
<span class="t" id="t11" style="left:23.09px;top:62.01px;height:17px;line-height:17px;font-family:'DejaVu Sans Condensed','DejaVu Sans','Liberation Sans',sans-serif;font-size:10.8px;font-weight:bold;color:#2b2b2b;letter-spacing:0.012px;">Fecha Inicial:</span>
<span class="t" id="t12" style="left:23.07px;top:94.32px;height:17px;line-height:17px;font-family:'DejaVu Sans Condensed','DejaVu Sans','Liberation Sans',sans-serif;font-size:10.8px;font-weight:bold;color:#2b2b2b;letter-spacing:0.229px;">Documento:</span>
<span class="t" id="t13" style="left:23.32px;top:122.32px;height:17px;line-height:17px;font-family:'DejaVu Sans Condensed','DejaVu Sans','Liberation Sans',sans-serif;font-size:10.8px;font-weight:bold;color:#2b2b2b;letter-spacing:0.151px;">Caja:</span>
<span class="t" id="t14" style="left:265.76px;top:62.01px;height:17px;line-height:17px;font-family:'DejaVu Sans Condensed','DejaVu Sans','Liberation Sans',sans-serif;font-size:10.8px;font-weight:bold;color:#2b2b2b;letter-spacing:-0.009px;">Fecha Final:</span>
<span class="t" id="t15" style="left:265.81px;top:94.32px;height:17px;line-height:17px;font-family:'DejaVu Sans Condensed','DejaVu Sans','Liberation Sans',sans-serif;font-size:10.8px;font-weight:bold;color:#2b2b2b;letter-spacing:0.076px;">Moneda:</span>
<span class="t" id="t16" style="left:502.67px;top:62.01px;height:17px;line-height:17px;font-family:'DejaVu Sans Condensed','DejaVu Sans','Liberation Sans',sans-serif;font-size:10.8px;font-weight:bold;color:#2b2b2b;letter-spacing:0.186px;">Conciliación:</span>
<span class="t" id="t17" style="left:502.59px;top:94.32px;height:17px;line-height:17px;font-family:'DejaVu Sans Condensed','DejaVu Sans','Liberation Sans',sans-serif;font-size:10.8px;font-weight:bold;color:#2b2b2b;letter-spacing:-0.065px;">Estado:</span>
<span class="t" id="t18" style="left:25.38px;top:166.01px;height:17px;line-height:17px;font-family:'DejaVu Sans Condensed','DejaVu Sans','Liberation Sans',sans-serif;font-size:10.8px;font-weight:bold;color:#2b2b2b;letter-spacing:0.040px;">Buscar Artículo:</span>
<span class="t" id="t19" style="left:73.05px;top:195.82px;height:17px;line-height:17px;font-family:'DejaVu Sans Condensed','DejaVu Sans','Liberation Sans',sans-serif;font-size:10.8px;font-weight:bold;color:#2b2b2b;letter-spacing:0.000px;transform:scaleX(0.9740);transform-origin:0 50%;">Buscar:</span>
<span class="t" id="t20" style="left:111.98px;top:62.22px;height:17px;line-height:17px;font-family:'DejaVu Sans','Liberation Sans',sans-serif;font-size:10.6px;font-weight:normal;color:#2b2b2b;letter-spacing:0.997px;-webkit-text-stroke:0.35px #2b2b2b;font-kerning:none;">02/12/2020</span>
<span class="t" id="t21" style="left:348.32px;top:62.22px;height:17px;line-height:17px;font-family:'DejaVu Sans','Liberation Sans',sans-serif;font-size:10.6px;font-weight:normal;color:#2b2b2b;letter-spacing:0.985px;-webkit-text-stroke:0.35px #2b2b2b;font-kerning:none;">02/12/2020</span>
<span class="t" id="t22" style="left:108.09px;top:94.41px;height:17px;line-height:17px;font-family:'DejaVu Sans','Liberation Sans',sans-serif;font-size:10.6px;font-weight:normal;color:#2b2b2b;letter-spacing:0.346px;-webkit-text-stroke:0.3px #2b2b2b;font-kerning:none;">Tickets</span>
<span class="t" id="t23" style="left:108.08px;top:122.41px;height:17px;line-height:17px;font-family:'DejaVu Sans','Liberation Sans',sans-serif;font-size:10.6px;font-weight:normal;color:#2b2b2b;letter-spacing:0.446px;-webkit-text-stroke:0.3px #2b2b2b;font-kerning:none;">Todas</span>
<span class="t" id="t24" style="left:344.15px;top:94.41px;height:17px;line-height:17px;font-family:'DejaVu Sans','Liberation Sans',sans-serif;font-size:10.6px;font-weight:normal;color:#2b2b2b;letter-spacing:0.457px;-webkit-text-stroke:0.3px #2b2b2b;font-kerning:none;">Todas</span>
<span class="t" id="t25" style="left:587.15px;top:62.22px;height:17px;line-height:17px;font-family:'DejaVu Sans','Liberation Sans',sans-serif;font-size:10.6px;font-weight:normal;color:#2b2b2b;letter-spacing:0.558px;-webkit-text-stroke:0.3px #2b2b2b;font-kerning:none;">Todos</span>
<span class="t" id="t26" style="left:587.15px;top:94.41px;height:17px;line-height:17px;font-family:'DejaVu Sans','Liberation Sans',sans-serif;font-size:10.6px;font-weight:normal;color:#2b2b2b;letter-spacing:0.558px;-webkit-text-stroke:0.3px #2b2b2b;font-kerning:none;">Todos</span>
<span class="t" id="t27" style="left:796.32px;top:82.60px;height:14px;line-height:14px;font-family:'DejaVu Sans Condensed','DejaVu Sans','Liberation Sans',sans-serif;font-size:9.0px;font-weight:bold;color:#2a2a2a;letter-spacing:-0.016px;">Consultar</span>
<span class="t" id="t28" style="left:788.81px;top:94.51px;height:14px;line-height:14px;font-family:'DejaVu Sans Condensed','DejaVu Sans','Liberation Sans',sans-serif;font-size:9.0px;font-weight:bold;color:#2a2a2a;letter-spacing:0.088px;">Estados CFDI</span>
<span class="t" id="t29" style="left:58.80px;top:243.01px;height:18px;line-height:18px;font-family:'DejaVu Sans Condensed','DejaVu Sans','Liberation Sans',sans-serif;font-size:11px;font-weight:bold;color:#ffffff;letter-spacing:0.047px;">Fecha</span>
<span class="t" id="t30" style="left:148.52px;top:243.01px;height:18px;line-height:18px;font-family:'DejaVu Sans Condensed','DejaVu Sans','Liberation Sans',sans-serif;font-size:11px;font-weight:bold;color:#ffffff;letter-spacing:0.329px;">Serie/Folio</span>
<span class="t" id="t31" style="left:256.48px;top:243.01px;height:18px;line-height:18px;font-family:'DejaVu Sans Condensed','DejaVu Sans','Liberation Sans',sans-serif;font-size:11px;font-weight:bold;color:#ffffff;letter-spacing:0.038px;">Fact</span>
<span class="t" id="t32" style="left:345.84px;top:243.01px;height:18px;line-height:18px;font-family:'DejaVu Sans Condensed','DejaVu Sans','Liberation Sans',sans-serif;font-size:11px;font-weight:bold;color:#ffffff;letter-spacing:0.473px;">Folio F.</span>
<span class="t" id="t33" style="left:513.64px;top:243.01px;height:18px;line-height:18px;font-family:'DejaVu Sans Condensed','DejaVu Sans','Liberation Sans',sans-serif;font-size:11px;font-weight:bold;color:#ffffff;letter-spacing:0.048px;">Cliente</span>
<span class="t" id="t34" style="left:649.52px;top:243.01px;height:18px;line-height:18px;font-family:'DejaVu Sans Condensed','DejaVu Sans','Liberation Sans',sans-serif;font-size:11px;font-weight:bold;color:#ffffff;letter-spacing:0.282px;">Usuario/Vendedor</span>
<span class="t" id="t35" style="left:766.10px;top:243.01px;height:18px;line-height:18px;font-family:'DejaVu Sans Condensed','DejaVu Sans','Liberation Sans',sans-serif;font-size:11px;font-weight:bold;color:#ffffff;letter-spacing:0.504px;">Est</span>
<span class="t" id="t36" style="left:800.60px;top:243.01px;height:18px;line-height:18px;font-family:'DejaVu Sans Condensed','DejaVu Sans','Liberation Sans',sans-serif;font-size:11px;font-weight:bold;color:#ffffff;letter-spacing:0.000px;">S</span>
<span class="t" id="t37" style="left:823.76px;top:243.01px;height:18px;line-height:18px;font-family:'DejaVu Sans Condensed','DejaVu Sans','Liberation Sans',sans-serif;font-size:11px;font-weight:bold;color:#ffffff;letter-spacing:0.420px;">SY</span>
<span class="t" id="t38" style="left:854.65px;top:243.01px;height:18px;line-height:18px;font-family:'DejaVu Sans Condensed','DejaVu Sans','Liberation Sans',sans-serif;font-size:11px;font-weight:bold;color:#ffffff;letter-spacing:0.803px;">Mon</span>
<span class="t" id="t39" style="left:902.48px;top:243.01px;height:18px;line-height:18px;font-family:'DejaVu Sans Condensed','DejaVu Sans','Liberation Sans',sans-serif;font-size:11px;font-weight:bold;color:#ffffff;letter-spacing:0.482px;">T. Cam</span>
<span class="t" id="t40" style="left:980.67px;top:243.01px;height:18px;line-height:18px;font-family:'DejaVu Sans Condensed','DejaVu Sans','Liberation Sans',sans-serif;font-size:11px;font-weight:bold;color:#ffffff;letter-spacing:0.453px;">Total/Saldo</span>
<span class="t" id="t41" style="left:18.28px;top:275.85px;height:17px;line-height:17px;font-family:'DejaVu Sans Condensed','DejaVu Sans','Liberation Sans',sans-serif;font-size:10.8px;font-weight:bold;color:#2b2b2b;letter-spacing:0.989px;">02/12/2020</span>
<span class="t" id="t42" style="left:141.78px;top:275.85px;height:17px;line-height:17px;font-family:'DejaVu Sans Condensed','DejaVu Sans','Liberation Sans',sans-serif;font-size:10.8px;font-weight:bold;color:#2b2b2b;letter-spacing:0.753px;">933</span>
<span class="t" id="t43" style="left:426.34px;top:275.85px;height:17px;line-height:17px;font-family:'DejaVu Sans Condensed','DejaVu Sans','Liberation Sans',sans-serif;font-size:10.8px;font-weight:bold;color:#2b2b2b;letter-spacing:0.092px;">Público en General</span>
<span class="t" id="t44" style="left:649.64px;top:275.85px;height:17px;line-height:17px;font-family:'DejaVu Sans Condensed','DejaVu Sans','Liberation Sans',sans-serif;font-size:10.8px;font-weight:bold;color:#2b2b2b;letter-spacing:0.517px;">admin</span>
<span class="t" id="t45" style="left:764.68px;top:275.85px;height:17px;line-height:17px;font-family:'DejaVu Sans','Liberation Sans',sans-serif;font-size:10.4px;font-weight:normal;color:#2b2b2b;letter-spacing:0.000px;-webkit-text-stroke:0.25px #2b2b2b;font-kerning:none;">V</span>
<span class="t" id="t46" style="left:849.02px;top:275.85px;height:17px;line-height:17px;font-family:'DejaVu Sans','Liberation Sans',sans-serif;font-size:10.4px;font-weight:normal;color:#2b2b2b;letter-spacing:1.190px;-webkit-text-stroke:0.25px #2b2b2b;transform:scaleX(1.0227);transform-origin:0 50%;font-kerning:none;">MXN</span>
<span class="t" id="t47" style="left:894.15px;top:275.85px;height:17px;line-height:17px;font-family:'DejaVu Sans Condensed','DejaVu Sans','Liberation Sans',sans-serif;font-size:10.8px;font-weight:bold;color:#2b2b2b;letter-spacing:0.538px;">1.000000</span>
<span class="t" id="t48" style="left:1028.82px;top:275.85px;height:17px;line-height:17px;font-family:'DejaVu Sans Condensed','DejaVu Sans','Liberation Sans',sans-serif;font-size:10.8px;font-weight:bold;color:#2b2b2b;letter-spacing:0.490px;">232.30</span>
<span class="t" id="t49" style="left:18.28px;top:308.32px;height:17px;line-height:17px;font-family:'DejaVu Sans Condensed','DejaVu Sans','Liberation Sans',sans-serif;font-size:10.8px;font-weight:bold;color:#2b2b2b;letter-spacing:0.989px;">02/12/2020</span>
<span class="t" id="t50" style="left:141.78px;top:308.32px;height:17px;line-height:17px;font-family:'DejaVu Sans Condensed','DejaVu Sans','Liberation Sans',sans-serif;font-size:10.8px;font-weight:bold;color:#2b2b2b;letter-spacing:0.472px;">934</span>
<span class="t" id="t51" style="left:426.34px;top:308.32px;height:17px;line-height:17px;font-family:'DejaVu Sans Condensed','DejaVu Sans','Liberation Sans',sans-serif;font-size:10.8px;font-weight:bold;color:#2b2b2b;letter-spacing:0.027px;">Elena Martínez</span>
<span class="t" id="t52" style="left:649.64px;top:308.32px;height:17px;line-height:17px;font-family:'DejaVu Sans Condensed','DejaVu Sans','Liberation Sans',sans-serif;font-size:10.8px;font-weight:bold;color:#2b2b2b;letter-spacing:0.517px;">admin</span>
<span class="t" id="t53" style="left:764.68px;top:308.31px;height:17px;line-height:17px;font-family:'DejaVu Sans','Liberation Sans',sans-serif;font-size:10.4px;font-weight:normal;color:#2b2b2b;letter-spacing:0.000px;-webkit-text-stroke:0.25px #2b2b2b;font-kerning:none;">V</span>
<span class="t" id="t54" style="left:849.01px;top:308.31px;height:17px;line-height:17px;font-family:'DejaVu Sans','Liberation Sans',sans-serif;font-size:10.4px;font-weight:normal;color:#2b2b2b;letter-spacing:1.194px;-webkit-text-stroke:0.25px #2b2b2b;transform:scaleX(1.0227);transform-origin:0 50%;font-kerning:none;">MXN</span>
<span class="t" id="t55" style="left:894.15px;top:308.32px;height:17px;line-height:17px;font-family:'DejaVu Sans Condensed','DejaVu Sans','Liberation Sans',sans-serif;font-size:10.8px;font-weight:bold;color:#2b2b2b;letter-spacing:0.539px;">1.000000</span>
<span class="t" id="t56" style="left:1036.06px;top:308.32px;height:17px;line-height:17px;font-family:'DejaVu Sans Condensed','DejaVu Sans','Liberation Sans',sans-serif;font-size:10.8px;font-weight:bold;color:#2b2b2b;letter-spacing:0.489px;">90.00</span>
<span class="t" id="t57" style="left:18.28px;top:340.76px;height:17px;line-height:17px;font-family:'DejaVu Sans Condensed','DejaVu Sans','Liberation Sans',sans-serif;font-size:10.8px;font-weight:bold;color:#2b2b2b;letter-spacing:0.989px;">02/12/2020</span>
<span class="t" id="t58" style="left:141.78px;top:340.76px;height:17px;line-height:17px;font-family:'DejaVu Sans Condensed','DejaVu Sans','Liberation Sans',sans-serif;font-size:10.8px;font-weight:bold;color:#2b2b2b;letter-spacing:0.718px;">935</span>
<span class="t" id="t59" style="left:426.34px;top:340.76px;height:17px;line-height:17px;font-family:'DejaVu Sans Condensed','DejaVu Sans','Liberation Sans',sans-serif;font-size:10.8px;font-weight:bold;color:#2b2b2b;letter-spacing:0.092px;">Público en General</span>
<span class="t" id="t60" style="left:649.64px;top:340.76px;height:17px;line-height:17px;font-family:'DejaVu Sans Condensed','DejaVu Sans','Liberation Sans',sans-serif;font-size:10.8px;font-weight:bold;color:#2b2b2b;letter-spacing:0.517px;">admin</span>
<span class="t" id="t61" style="left:764.68px;top:340.76px;height:17px;line-height:17px;font-family:'DejaVu Sans','Liberation Sans',sans-serif;font-size:10.4px;font-weight:normal;color:#2b2b2b;letter-spacing:0.000px;-webkit-text-stroke:0.25px #2b2b2b;font-kerning:none;">V</span>
<span class="t" id="t62" style="left:849.02px;top:340.76px;height:17px;line-height:17px;font-family:'DejaVu Sans','Liberation Sans',sans-serif;font-size:10.4px;font-weight:normal;color:#2b2b2b;letter-spacing:1.190px;-webkit-text-stroke:0.25px #2b2b2b;transform:scaleX(1.0227);transform-origin:0 50%;font-kerning:none;">MXN</span>
<span class="t" id="t63" style="left:894.15px;top:340.76px;height:17px;line-height:17px;font-family:'DejaVu Sans Condensed','DejaVu Sans','Liberation Sans',sans-serif;font-size:10.8px;font-weight:bold;color:#2b2b2b;letter-spacing:0.538px;">1.000000</span>
<span class="t" id="t64" style="left:1036.00px;top:340.76px;height:17px;line-height:17px;font-family:'DejaVu Sans Condensed','DejaVu Sans','Liberation Sans',sans-serif;font-size:10.8px;font-weight:bold;color:#2b2b2b;letter-spacing:0.505px;">41.50</span>
<span class="t" id="t65" style="left:18.28px;top:373.21px;height:17px;line-height:17px;font-family:'DejaVu Sans Condensed','DejaVu Sans','Liberation Sans',sans-serif;font-size:10.8px;font-weight:bold;color:#2b2b2b;letter-spacing:0.989px;">02/12/2020</span>
<span class="t" id="t66" style="left:141.78px;top:373.21px;height:17px;line-height:17px;font-family:'DejaVu Sans Condensed','DejaVu Sans','Liberation Sans',sans-serif;font-size:10.8px;font-weight:bold;color:#2b2b2b;letter-spacing:0.666px;">936</span>
<span class="t" id="t67" style="left:426.48px;top:373.21px;height:17px;line-height:17px;font-family:'DejaVu Sans Condensed','DejaVu Sans','Liberation Sans',sans-serif;font-size:10.8px;font-weight:bold;color:#2b2b2b;letter-spacing:0.054px;">Marco Huerta</span>
<span class="t" id="t68" style="left:649.64px;top:373.21px;height:17px;line-height:17px;font-family:'DejaVu Sans Condensed','DejaVu Sans','Liberation Sans',sans-serif;font-size:10.8px;font-weight:bold;color:#2b2b2b;letter-spacing:0.517px;">admin</span>
<span class="t" id="t69" style="left:764.68px;top:373.21px;height:17px;line-height:17px;font-family:'DejaVu Sans','Liberation Sans',sans-serif;font-size:10.4px;font-weight:normal;color:#2b2b2b;letter-spacing:0.000px;-webkit-text-stroke:0.25px #2b2b2b;font-kerning:none;">V</span>
<span class="t" id="t70" style="left:849.01px;top:373.21px;height:17px;line-height:17px;font-family:'DejaVu Sans','Liberation Sans',sans-serif;font-size:10.4px;font-weight:normal;color:#2b2b2b;letter-spacing:1.194px;-webkit-text-stroke:0.25px #2b2b2b;transform:scaleX(1.0227);transform-origin:0 50%;font-kerning:none;">MXN</span>
<span class="t" id="t71" style="left:894.15px;top:373.21px;height:17px;line-height:17px;font-family:'DejaVu Sans Condensed','DejaVu Sans','Liberation Sans',sans-serif;font-size:10.8px;font-weight:bold;color:#2b2b2b;letter-spacing:0.539px;">1.000000</span>
<span class="t" id="t72" style="left:1029.04px;top:373.21px;height:17px;line-height:17px;font-family:'DejaVu Sans Condensed','DejaVu Sans','Liberation Sans',sans-serif;font-size:10.8px;font-weight:bold;color:#2b2b2b;letter-spacing:0.445px;">710.00</span>
<span class="t" id="t73" style="left:18.28px;top:405.66px;height:17px;line-height:17px;font-family:'DejaVu Sans Condensed','DejaVu Sans','Liberation Sans',sans-serif;font-size:10.8px;font-weight:bold;color:#2b2b2b;letter-spacing:0.989px;">02/12/2020</span>
<span class="t" id="t74" style="left:141.78px;top:405.66px;height:17px;line-height:17px;font-family:'DejaVu Sans Condensed','DejaVu Sans','Liberation Sans',sans-serif;font-size:10.8px;font-weight:bold;color:#2b2b2b;letter-spacing:0.736px;">937</span>
<span class="t" id="t75" style="left:426.48px;top:405.66px;height:17px;line-height:17px;font-family:'DejaVu Sans Condensed','DejaVu Sans','Liberation Sans',sans-serif;font-size:10.8px;font-weight:bold;color:#2b2b2b;letter-spacing:0.054px;">Marco Huerta</span>
<span class="t" id="t76" style="left:649.64px;top:405.66px;height:17px;line-height:17px;font-family:'DejaVu Sans Condensed','DejaVu Sans','Liberation Sans',sans-serif;font-size:10.8px;font-weight:bold;color:#2b2b2b;letter-spacing:0.517px;">admin</span>
<span class="t" id="t77" style="left:764.68px;top:405.65px;height:17px;line-height:17px;font-family:'DejaVu Sans','Liberation Sans',sans-serif;font-size:10.4px;font-weight:normal;color:#2b2b2b;letter-spacing:0.000px;-webkit-text-stroke:0.25px #2b2b2b;font-kerning:none;">V</span>
<span class="t" id="t78" style="left:849.02px;top:405.65px;height:17px;line-height:17px;font-family:'DejaVu Sans','Liberation Sans',sans-serif;font-size:10.4px;font-weight:normal;color:#2b2b2b;letter-spacing:1.190px;-webkit-text-stroke:0.25px #2b2b2b;transform:scaleX(1.0227);transform-origin:0 50%;font-kerning:none;">MXN</span>
<span class="t" id="t79" style="left:894.15px;top:405.66px;height:17px;line-height:17px;font-family:'DejaVu Sans Condensed','DejaVu Sans','Liberation Sans',sans-serif;font-size:10.8px;font-weight:bold;color:#2b2b2b;letter-spacing:0.538px;">1.000000</span>
<span class="t" id="t80" style="left:1028.82px;top:405.66px;height:17px;line-height:17px;font-family:'DejaVu Sans Condensed','DejaVu Sans','Liberation Sans',sans-serif;font-size:10.8px;font-weight:bold;color:#2b2b2b;letter-spacing:0.490px;">260.00</span>
<span class="t" id="t81" style="left:18.28px;top:438.10px;height:17px;line-height:17px;font-family:'DejaVu Sans Condensed','DejaVu Sans','Liberation Sans',sans-serif;font-size:10.8px;font-weight:bold;color:#2b2b2b;letter-spacing:0.989px;">02/12/2020</span>
<span class="t" id="t82" style="left:141.78px;top:438.10px;height:17px;line-height:17px;font-family:'DejaVu Sans Condensed','DejaVu Sans','Liberation Sans',sans-serif;font-size:10.8px;font-weight:bold;color:#2b2b2b;letter-spacing:0.691px;">938</span>
<span class="t" id="t83" style="left:426.34px;top:438.10px;height:17px;line-height:17px;font-family:'DejaVu Sans Condensed','DejaVu Sans','Liberation Sans',sans-serif;font-size:10.8px;font-weight:bold;color:#2b2b2b;letter-spacing:0.093px;">Público en General</span>
<span class="t" id="t84" style="left:649.64px;top:438.10px;height:17px;line-height:17px;font-family:'DejaVu Sans Condensed','DejaVu Sans','Liberation Sans',sans-serif;font-size:10.8px;font-weight:bold;color:#2b2b2b;letter-spacing:0.517px;">admin</span>
<span class="t" id="t85" style="left:764.68px;top:438.10px;height:17px;line-height:17px;font-family:'DejaVu Sans','Liberation Sans',sans-serif;font-size:10.4px;font-weight:normal;color:#2b2b2b;letter-spacing:0.000px;-webkit-text-stroke:0.25px #2b2b2b;font-kerning:none;">V</span>
<span class="t" id="t86" style="left:849.01px;top:438.10px;height:17px;line-height:17px;font-family:'DejaVu Sans','Liberation Sans',sans-serif;font-size:10.4px;font-weight:normal;color:#2b2b2b;letter-spacing:1.194px;-webkit-text-stroke:0.25px #2b2b2b;transform:scaleX(1.0227);transform-origin:0 50%;font-kerning:none;">MXN</span>
<span class="t" id="t87" style="left:894.15px;top:438.10px;height:17px;line-height:17px;font-family:'DejaVu Sans Condensed','DejaVu Sans','Liberation Sans',sans-serif;font-size:10.8px;font-weight:bold;color:#2b2b2b;letter-spacing:0.539px;">1.000000</span>
<span class="t" id="t88" style="left:1029.00px;top:438.10px;height:17px;line-height:17px;font-family:'DejaVu Sans Condensed','DejaVu Sans','Liberation Sans',sans-serif;font-size:10.8px;font-weight:bold;color:#2b2b2b;letter-spacing:0.454px;">420.00</span>
<span class="t" id="t89" style="left:523.31px;top:591.62px;height:15px;line-height:15px;font-family:'DejaVu Sans','Liberation Sans',sans-serif;font-size:9.5px;font-weight:normal;color:#a3a3a3;letter-spacing:0.000px;transform:scaleX(0.9282);transform-origin:0 50%;">Página</span>
<span class="t" id="t90" style="left:493.59px;top:616.30px;height:19px;line-height:19px;font-family:'DejaVu Serif','Liberation Serif',serif;font-size:11.6px;font-weight:normal;color:#909090;letter-spacing:0.000px;-webkit-text-stroke:0.4px #909090;">1</span>
<span class="t" id="t91" style="left:583.45px;top:616.30px;height:19px;line-height:19px;font-family:'DejaVu Serif','Liberation Serif',serif;font-size:11.6px;font-weight:normal;color:#909090;letter-spacing:0.000px;-webkit-text-stroke:0.4px #909090;">1</span>
<span class="t" id="t92" style="left:531.31px;top:614.31px;height:21px;line-height:21px;font-family:'DejaVu Sans','Liberation Sans',sans-serif;font-size:13.3px;font-weight:normal;color:#adadad;letter-spacing:-0.038px;">de</span>
</div>
</body>
</html>
